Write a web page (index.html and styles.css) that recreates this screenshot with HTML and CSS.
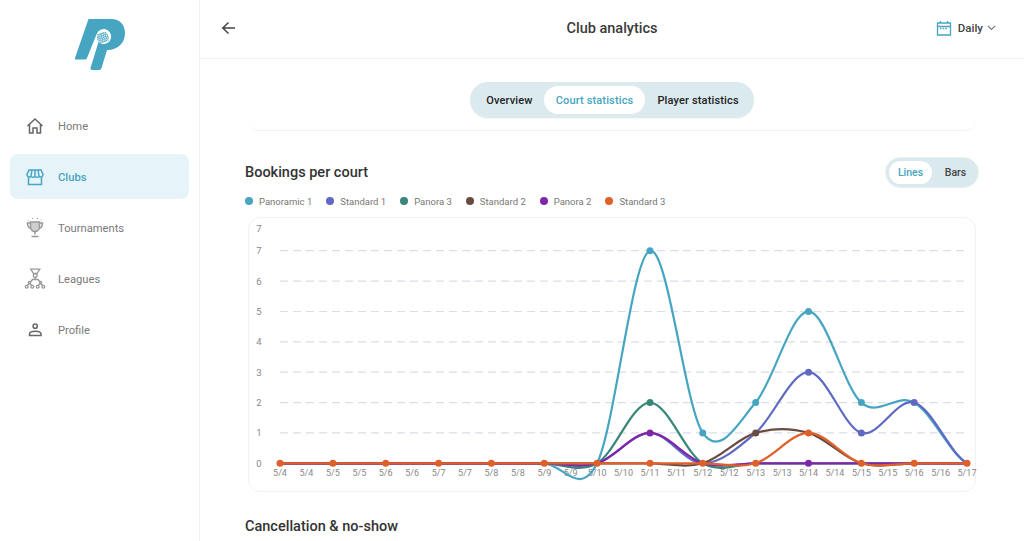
FILE: index.html
```html
<!DOCTYPE html>
<html lang="en">
<head>
<meta charset="utf-8">
<title>Club analytics</title>
<link rel="stylesheet" href="styles.css">
</head>
<body>
<div class="app">
  <aside class="sidebar">
    <svg class="logo" viewBox="0 0 199 103" width="199" height="103">
      <path class="logo-p" d="M88.5 19H111C120 19 125 25 125 33C125 43 118 50 107 50L101.5 68Q101 70 99 70H92Q90 70 90.5 68L98.500 42A7.500 7.500 0 1 0 96.700 34L87 58Q86.500 59.500 85 59.500H76Q74.500 59.500 75 58Z"/>
      <circle class="logo-ball" cx="102.800" cy="37.300" r="5.400"/>
      <g class="logo-net" transform="rotate(-18 103 37.500)">
        <path d="M98.500 33.500H107.500M97.500 35.500H108.500M97 37.500H109M97.500 39.500H108.500M98.500 41.500H107.500"/>
      </g>
    </svg>
    <nav class="nav">
      <a class="nav-item">
        <svg class="nav-icon stroke-dark" viewBox="0 0 24 24" width="24" height="24"><path d="M4.500 12L12 5L19.500 12M6.500 10.500V19H10V14H14V19H17.500V10.500"/></svg>
        <span class="nav-label">Home</span>
      </a>
      <a class="nav-item active">
        <svg class="nav-icon stroke-teal" viewBox="0 0 24 24" width="24" height="24"><path d="M6 5H18L20 9.500C20 11.500 18 12.500 16 11.500C14.500 12.500 13 12.500 12 11.500C11 12.500 9.500 12.500 8 11.500C6 12.500 4 11.500 4 9.500ZM9 5L8 11M12 5V11M15 5L16 11M5.500 12V19.500H18.500V12"/></svg>
        <span class="nav-label">Clubs</span>
      </a>
      <a class="nav-item">
        <svg class="nav-icon stroke-light" viewBox="0 0 24 24" width="24" height="24"><path class="dots" d="M5 5L6 3.500M9 2.500H10M14 2.500H15M18 3.500L19 5"/><path class="cup" d="M7.500 6H16.500V11C16.500 13.500 14.500 15.500 12 15.500C9.500 15.500 7.500 13.500 7.500 11Z"/><path d="M7.500 7H4.500C4.500 10 5.500 12 8 12.500M16.500 7H19.500C19.500 10 18.500 12 16 12.500M12 15.500V18.500M8.500 20.500H15.500"/></svg>
        <span class="nav-label">Tournaments</span>
      </a>
      <a class="nav-item">
        <svg class="nav-icon stroke-light thin" viewBox="0 0 24 24" width="24" height="24"><path d="M7.800 2.200H16.800L14 6.500H10.500ZM12.200 10.500V12.500M7 15.500L9.500 12.500H15L17.500 15.500M6.500 16.500L4 18.500M6.500 16.500L9 18.500M17.500 16.500L15 18.500M17.500 16.500L20 18.500"/><circle cx="12.200" cy="8.500" r="1.900"/><circle cx="6.500" cy="15.500" r="1.100"/><circle cx="17.500" cy="15.500" r="1.100"/><circle cx="3.700" cy="19.800" r="1.400"/><circle cx="9.300" cy="19.800" r="1.400"/><circle cx="14.700" cy="19.800" r="1.400"/><circle cx="20.300" cy="19.800" r="1.400"/></svg>
        <span class="nav-label">Leagues</span>
      </a>
      <a class="nav-item">
        <svg class="nav-icon stroke-dark" viewBox="0 0 24 24" width="24" height="24"><circle cx="12.200" cy="8.200" r="2.100"/><path d="M6.500 17.500V16C6.500 14 9 13.200 12.200 13.200C15.400 13.200 18 14 18 16V17.500Z"/></svg>
        <span class="nav-label">Profile</span>
      </a>
    </nav>
  </aside>

  <main class="main">
    <header class="topbar">
      <svg class="back" viewBox="0 0 16 16" width="16" height="16"><path d="M14 8H2M7.500 2.500L1.800 8L7.500 13.500"/></svg>
      <h1 class="page-title">Club analytics</h1>
      <div class="period">
        <svg class="calendar" viewBox="0 0 16 16" width="16" height="16"><path d="M1.500 3H14.500V15H1.500ZM1.500 6.500H14.500M4.500 1V3M11.500 1V3"/><path class="calendar-dots" d="M4 8.500H12"/></svg>
        <span class="period-label">Daily</span>
        <svg class="chevron" viewBox="0 0 10 6" width="9" height="5.400"><path d="M1 1L5 5L9 1"/></svg>
      </div>
    </header>

    <div class="content">
      <div class="card-tail">
        <div class="tabs">
          <span class="tab">Overview</span>
          <span class="tab tab-active">Court statistics</span>
          <span class="tab tab-last">Player statistics</span>
        </div>
      </div>

      <section class="section">
        <div class="section-head">
          <h2 class="section-title">Bookings per court</h2>
          <div class="toggle">
            <span class="toggle-item toggle-active">Lines</span>
            <span class="toggle-item toggle-bars">Bars</span>
          </div>
        </div>
        <ul class="legend">
          <li class="legend-item"><i class="swatch c1"></i>Panoramic 1</li>
          <li class="legend-item"><i class="swatch c2"></i>Standard 1</li>
          <li class="legend-item"><i class="swatch c3"></i>Panora 3</li>
          <li class="legend-item"><i class="swatch c4"></i>Standard 2</li>
          <li class="legend-item"><i class="swatch c5"></i>Panora 2</li>
          <li class="legend-item"><i class="swatch c6"></i>Standard 3</li>
        </ul>
        <div class="chart-card">
          <svg class="chart" viewBox="249 218 726 273" width="726" height="273">
            <g class="grid">
              <path d="M280 250.700H967M280 281.100H967M280 311.500H967M280 341.800H967M280 372.200H967M280 402.600H967M280 432.900H967"/>
            </g>
            <g class="y-labels">
              <text x="259" y="232">7</text>
              <text x="259" y="254">7</text>
              <text x="259" y="284.500">6</text>
              <text x="259" y="315">5</text>
              <text x="259" y="345">4</text>
              <text x="259" y="375.500">3</text>
              <text x="259" y="406">2</text>
              <text x="259" y="436">1</text>
              <text x="259" y="466.500">0</text>
            </g>
            <g class="x-labels">
              <text x="280" y="476">5/4</text><text x="306.400" y="476">5/4</text>
              <text x="332.900" y="476">5/5</text><text x="359.300" y="476">5/5</text>
              <text x="385.700" y="476">5/6</text><text x="412.100" y="476">5/6</text>
              <text x="438.600" y="476">5/7</text><text x="465" y="476">5/7</text>
              <text x="491.400" y="476">5/8</text><text x="517.800" y="476">5/8</text>
              <text x="544.300" y="476">5/9</text><text x="570.700" y="476">5/9</text>
              <text x="597.100" y="476">5/10</text><text x="623.500" y="476">5/10</text>
              <text x="650" y="476">5/11</text><text x="676.400" y="476">5/11</text>
              <text x="702.800" y="476">5/12</text><text x="729.200" y="476">5/12</text>
              <text x="755.700" y="476">5/13</text><text x="782.100" y="476">5/13</text>
              <text x="808.500" y="476">5/14</text><text x="834.900" y="476">5/14</text>
              <text x="861.400" y="476">5/15</text><text x="887.800" y="476">5/15</text>
              <text x="914.200" y="476">5/16</text><text x="940.600" y="476">5/16</text>
              <text x="967" y="476">5/17</text>
            </g>
            <g class="lines" transform="translate(280 463.300) scale(8.8083 -5.0617)">
              <path class="l1" d="M0 0L30 0C32 0 34 -7 36 0C38 7 40 41 42 42C44 43 46 11 48 6C50 1 52 8 54 12C56 16 58 30 60 30C62 30 64 15 66 12C68 9 70 14 72 12C74 10 76 2 78 0"/>
              <path class="l2" d="M0 0L30 0C32 0 34 -1 36 0C38 1 40 6 42 6C44 6 46 0 48 0C50 0 52 3 54 6C56 9 58 18 60 18C62 18 64 7 66 6C68 5 70 13 72 12C74 11 76 2 78 0"/>
              <path class="l3" d="M0 0L30 0C32 0 34 -2 36 0C38 2 40 12 42 12C44 12 46 2 48 0C50 -2 52 0 54 0L78 0"/>
              <path class="l4" d="M0 0L42 0C44 0 46 -1 48 0C50 1 52 5 54 6C56 7 58 7 60 6C62 5 64 1 66 0C68 -1 70 0 72 0L78 0"/>
              <path class="l5" d="M0 0L30 0C32 0 34 -1 36 0C38 1 40 6 42 6C44 6 46 1 48 0C50 -1 52 0 54 0L78 0"/>
              <path class="l6" d="M0 0L48 0C50 0 52 -1 54 0C56 1 58 6 60 6C62 6 64 1 66 0C68 -1 70 0 72 0L78 0"/>
            </g>
            <g class="dots-c1">
              <circle cx="650" cy="250.700" r="3.500"/><circle cx="702.800" cy="432.900" r="3.500"/><circle cx="755.700" cy="402.600" r="3.500"/><circle cx="808.500" cy="311.500" r="3.500"/><circle cx="861.400" cy="402.600" r="3.500"/>
            </g>
            <g class="dots-c2">
              <circle cx="808.500" cy="372.200" r="3.500"/><circle cx="861.400" cy="432.900" r="3.500"/><circle cx="914.200" cy="402.600" r="3.500"/>
            </g>
            <g class="dots-c3"><circle cx="650" cy="402.600" r="3.500"/></g>
            <g class="dots-c4"><circle cx="755.700" cy="432.900" r="3.500"/></g>
            <g class="dots-c5"><circle cx="650" cy="432.900" r="3.500"/><circle cx="808.500" cy="463.300" r="3.500"/></g>
            <g class="dots-c6">
              <circle cx="280" cy="463.300" r="3.500"/><circle cx="332.900" cy="463.300" r="3.500"/><circle cx="385.700" cy="463.300" r="3.500"/><circle cx="438.600" cy="463.300" r="3.500"/><circle cx="491.400" cy="463.300" r="3.500"/><circle cx="544.300" cy="463.300" r="3.500"/><circle cx="597.100" cy="463.300" r="3.500"/><circle cx="650" cy="463.300" r="3.500"/><circle cx="702.800" cy="463.300" r="3.500"/><circle cx="755.700" cy="463.300" r="3.500"/><circle cx="808.500" cy="432.900" r="3.500"/><circle cx="861.400" cy="463.300" r="3.500"/><circle cx="914.200" cy="463.300" r="3.500"/><circle cx="967" cy="463.300" r="3.500"/>
            </g>
          </svg>
        </div>
      </section>

      <h2 class="section-title next-title">Cancellation &amp; no-show</h2>
    </div>
  </main>
</div>
</body>
</html>
```

FILE: styles.css
```css
* { box-sizing: border-box; }
html, body { margin: 0; height: 541px; overflow: hidden; }
body { font-family: Roboto, "Liberation Sans", sans-serif; background: #fff; color: #333; }
h1, h2, ul { margin: 0; padding: 0; }
ul { list-style: none; }

.app { display: flex; height: 541px; }

.sidebar { flex: 0 0 199px; border-right: 1px solid #f0f0f0; }
.logo { display: block; }
.logo-p { fill: #46a5c1; }
.logo-ball { fill: #46a5c1; opacity: .3; }
.logo-net path { fill: none; stroke: #46a5c1; stroke-width: 1.300; stroke-dasharray: 1.300 .7; }

.nav { display: flex; flex-direction: column; gap: 6px; padding: 0 10px; }
.nav-item { display: flex; align-items: center; gap: 11px; height: 45px; padding-left: 13px; border-radius: 8px; font-size: 11.200px; color: #7a7a7a; }
.nav-item.active { background: #e6f4f9; color: #46a5c1; font-weight: 500; }
.nav-label { padding-top: 2px; }
.nav-icon { flex: none; fill: none; stroke-width: 1.500; }
.stroke-dark { stroke: #666; }
.stroke-teal { stroke: #46a5c1; }
.stroke-light { stroke: #999; }
.stroke-light.thin { stroke-width: 1.300; }
.cup { fill: #cfcfcf; }
.dots { stroke-width: 1; stroke-dasharray: 1 1; }

.main { flex: 1; min-width: 0; display: flex; flex-direction: column; }

.topbar { flex: 0 0 59px; display: flex; align-items: center; padding: 0 28px 2px 21px; border-bottom: 1px solid #f2f2f2; position: relative; }
.back { fill: none; stroke: #444; stroke-width: 1.500; }
.page-title { position: absolute; left: 0; right: 0; text-align: center; font-size: 14.500px; font-weight: 500; color: #3a3a3a; }
.period { margin-left: auto; display: flex; align-items: center; gap: 6px; font-size: 11.500px; font-weight: 500; color: #444; }
.calendar { fill: none; stroke: #46a5c1; stroke-width: 1.300; }
.calendar-dots { stroke-width: 1.500; stroke-dasharray: 1.500 1.200; }
.chevron { fill: none; stroke: #777; stroke-width: 1.300; margin-left: -2px; }

.content { padding: 0 45px; }

.card-tail { display: flex; justify-content: center; height: 72px; margin: 0 4px; padding-top: 23px; border-bottom: 1px solid #f2f2f2; border-radius: 0 0 10px 10px; }
.tabs { display: flex; align-items: center; gap: 0; height: 36px; padding: 0 4px 0 5px; border-radius: 18px; background: #dbeaef; font-size: 11px; font-weight: 500; color: #222; box-shadow: 0 1px 2px rgba(0,0,0,.04); }
.tab { display: flex; align-items: center; height: 28px; padding: 0 11px; letter-spacing: .15px; }
.tab-active { background: #fff; border-radius: 14px; color: #46a5c1; padding: 0 12px; }
.tab-last { padding: 0 11px 0 12px; }

.section { padding-top: 26px; }
.section-head { display: flex; align-items: center; justify-content: space-between; height: 31px; }
.section-title { font-size: 14.500px; font-weight: 500; color: #333; }
.toggle { display: flex; align-items: center; height: 31px; padding: 0 3px; border-radius: 16px; background: #d9e9ed; border: 1px solid #e6f1f4; font-size: 10.500px; font-weight: 500; color: #444; }
.toggle-item { display: flex; align-items: center; justify-content: center; height: 23px; width: 43px; }
.toggle-active { background: #fff; border-radius: 12px; color: #46a5c1; }
.toggle-bars { padding-left: 4px; }

.legend { display: flex; gap: 14px; margin-top: 6px; height: 14px; align-items: center; font-size: 9.500px; color: #777; }
.legend-item { display: flex; align-items: center; gap: 6px; }
.swatch { display: block; width: 8px; height: 8px; border-radius: 50%; }
.c1 { background: #46a5c1; }
.c2 { background: #5f69c3; }
.c3 { background: #38877b; }
.c4 { background: #6a4b40; }
.c5 { background: #7f27ab; }
.c6 { background: #e0602a; }

.chart-card { width: 728px; height: 275px; margin: 9px 0 0 3px; border: 1px solid #f2f2f2; border-radius: 12px; }
.chart { display: block; overflow: visible; }
.grid path { fill: none; stroke: #d8e0e7; stroke-width: 1.200; stroke-dasharray: 8 5; }
.y-labels text { font-size: 9.500px; fill: #888; text-anchor: middle; }
.x-labels text { font-size: 9px; fill: #888; text-anchor: middle; }
.lines path { fill: none; stroke-width: 2.200; vector-effect: non-scaling-stroke; }
.l1 { stroke: #46a5c1; }
.l2 { stroke: #5f69c3; }
.l3 { stroke: #38877b; }
.l4 { stroke: #6a4b40; }
.l5 { stroke: #7f27ab; }
.l6 { stroke: #e0602a; }
.dots-c1 { fill: #46a5c1; }
.dots-c2 { fill: #5f69c3; }
.dots-c3 { fill: #38877b; }
.dots-c4 { fill: #6a4b40; }
.dots-c5 { fill: #7f27ab; }
.dots-c6 { fill: #e0602a; }

.next-title { margin-top: 26px; }
```
